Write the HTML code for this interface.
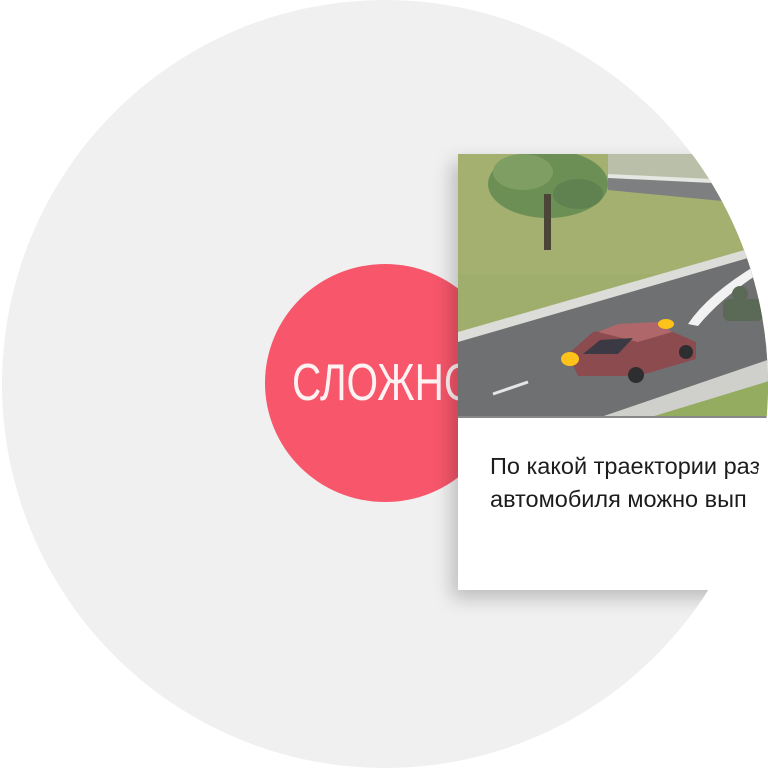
<!DOCTYPE html>
<html><head><meta charset="utf-8"><style>
html,body{margin:0;padding:0;background:#fff;width:768px;height:768px;overflow:hidden}
.big{position:absolute;left:2px;top:0;width:766px;height:768px;border-radius:50%;background:#f0f0f0;overflow:hidden}
.red{position:absolute;left:263px;top:264px;width:240px;height:238px;border-radius:50%;background:#f7566b}
.txt{position:absolute;left:290px;top:353px;font:200 52px "Liberation Sans",sans-serif;color:rgba(255,255,255,.92);white-space:nowrap;transform:scaleX(.78);transform-origin:0 0}
.card{position:absolute;left:456px;top:154px;width:400px;height:436px;background:#fff;box-shadow:-6px 8px 18px rgba(0,0,0,.22)}
.q{position:absolute;left:32px;top:296px;font:23.5px "Liberation Sans",sans-serif;color:#1c1c1c;line-height:33px;white-space:nowrap}
</style></head><body>
<div class="big">
<div class="red"></div>
<div class="txt">СЛОЖНО</div>
<div class="card">
<svg width="400" height="264" viewBox="0 0 400 264" style="position:absolute;left:0;top:0">
<rect width="400" height="264" fill="#9fae6c"/>
<rect x="0" y="0" width="400" height="120" fill="#a4b06f"/>
<polygon points="150,0 400,0 400,50 150,20" fill="#b9bfa8"/>
<polygon points="150,20 400,40 400,60 150,36" fill="#7d7f80"/>
<polygon points="150,20 400,32 400,36 150,24" fill="#e6e6e2"/>
<polygon points="0,185 290,100 400,70 400,182 160,264 0,264" fill="#6f7072"/>
<polygon points="0,178 290,95 400,64 400,72 290,104 0,188" fill="#dcdcd8"/>
<polygon points="140,264 400,175 400,200 190,264" fill="#cfd0cb"/>
<polygon points="190,264 400,200 400,264" fill="#93ac5f"/>
<path d="M230,170 Q250,140 300,110 L300,120 Q262,145 240,172Z" fill="#f2f2f2"/>
<g fill="#5b6a57"><rect x="265" y="145" width="40" height="22" rx="6"/><circle cx="282" cy="140" r="8"/></g>
<line x1="35" y1="240" x2="70" y2="228" stroke="#e5e5e5" stroke-width="3"/>
<g>
<path d="M110,200 L135,178 L190,170 L215,178 L238,188 L238,205 L180,222 L120,222 Z" fill="#8c4b4e"/>
<path d="M140,178 L160,170 L200,168 L214,178 L180,188 Z" fill="#b0676a"/>
<path d="M125,200 L142,186 L175,184 L160,200 Z" fill="#3b3a44"/>
<circle cx="178" cy="221" r="8" fill="#2e2e30"/><circle cx="228" cy="198" r="7" fill="#2e2e30"/>
<ellipse cx="112" cy="205" rx="9" ry="7" fill="#ffc21a"/>
<ellipse cx="208" cy="170" rx="8" ry="5" fill="#ffc21a"/>
</g>
<ellipse cx="90" cy="30" rx="60" ry="34" fill="#6c8f55"/>
<ellipse cx="65" cy="18" rx="30" ry="18" fill="#7e9e63"/>
<ellipse cx="120" cy="40" rx="25" ry="15" fill="#5f8250"/>
<rect x="86" y="40" width="7" height="56" fill="#4a4536"/>
<rect x="0" y="262" width="400" height="2" fill="#888"/>
</svg>
<div class="q">По какой траектории раз<br>автомобиля можно вып</div>
</div>
</div>
</body></html>
